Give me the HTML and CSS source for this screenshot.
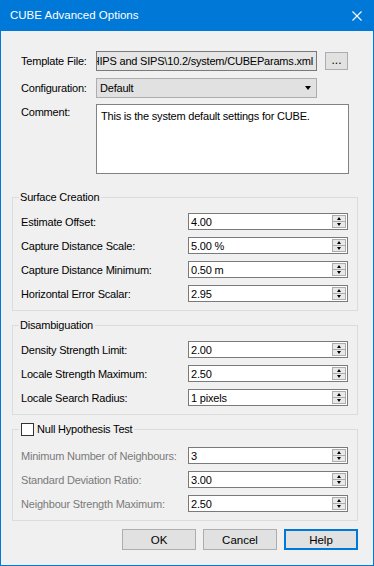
FILE: index.html
```html
<!DOCTYPE html>
<html>
<head>
	<title>CUBE Advanced Options</title>
	<link rel="stylesheet" href="styles.css">
</head>
<body>

	<div class="window">
		<div class="titlebar">
			<span class="title">CUBE Advanced Options</span>
			<svg class="close" width="10" height="10" viewBox="0 0 10 10">
				<path d="M0.5 0.5 L9.5 9.5 M9.5 0.5 L0.5 9.5" stroke="#fff" stroke-width="1.1" fill="none"/>
			</svg>
		</div>

		<div class="content">
			<div class="row">
				<label>Template File:</label>
				<div class="path"><span>HIPS and SIPS\10.2/system/CUBEParams.xml</span></div>
				<button class="browse">...</button>
			</div>
			<div class="row">
				<label>Configuration:</label>
				<div class="combo">Default<span class="arrow"></span></div>
			</div>
			<div class="row comment-row">
				<label>Comment:</label>
				<div class="memo">This is the system default settings for CUBE.</div>
			</div>

			<fieldset class="group">
				<legend>Surface Creation</legend>
				<div class="field"><label>Estimate Offset:</label><div class="spin"><span class="val">4.00</span><span class="spinbtn"><i class="up"></i><i class="down"></i></span></div></div>
				<div class="field"><label>Capture Distance Scale:</label><div class="spin"><span class="val">5.00 %</span><span class="spinbtn"><i class="up"></i><i class="down"></i></span></div></div>
				<div class="field"><label>Capture Distance Minimum:</label><div class="spin"><span class="val">0.50 m</span><span class="spinbtn"><i class="up"></i><i class="down"></i></span></div></div>
				<div class="field"><label>Horizontal Error Scalar:</label><div class="spin"><span class="val">2.95</span><span class="spinbtn"><i class="up"></i><i class="down"></i></span></div></div>
			</fieldset>

			<fieldset class="group">
				<legend>Disambiguation</legend>
				<div class="field"><label>Density Strength Limit:</label><div class="spin"><span class="val">2.00</span><span class="spinbtn"><i class="up"></i><i class="down"></i></span></div></div>
				<div class="field"><label>Locale Strength Maximum:</label><div class="spin"><span class="val">2.50</span><span class="spinbtn"><i class="up"></i><i class="down"></i></span></div></div>
				<div class="field"><label>Locale Search Radius:</label><div class="spin"><span class="val">1 pixels</span><span class="spinbtn"><i class="up"></i><i class="down"></i></span></div></div>
			</fieldset>

			<fieldset class="group null-group">
				<legend><span class="check"></span>Null Hypothesis Test</legend>
				<div class="field disabled"><label>Minimum Number of Neighbours:</label><div class="spin"><span class="val">3</span><span class="spinbtn"><i class="up"></i><i class="down"></i></span></div></div>
				<div class="field disabled"><label>Standard Deviation Ratio:</label><div class="spin"><span class="val">3.00</span><span class="spinbtn"><i class="up"></i><i class="down"></i></span></div></div>
				<div class="field disabled"><label>Neighbour Strength Maximum:</label><div class="spin"><span class="val">2.50</span><span class="spinbtn"><i class="up"></i><i class="down"></i></span></div></div>
			</fieldset>

			<div class="buttons">
				<button class="btn">OK</button>
				<button class="btn">Cancel</button>
				<button class="btn default">Help</button>
			</div>
		</div>
	</div>

</body>
</html>
```

FILE: styles.css
```css
body{
	margin: 0;
	background: #fff;
	font-family: "Liberation Sans", Arial, sans-serif;
	font-size: 11px;
	letter-spacing: -0.2px;
	color: #000;
}

.window{
	width: 374px;
	height: 566px;
	box-sizing: border-box;
	border: 1px solid #0078d7;
	border-top: 0;
	background: #f0f0f0;
}

.titlebar{
	height: 31px;
	background: #0078d7;
	color: #fff;
	display: flex;
	align-items: center;
	justify-content: space-between;
	padding: 0 11px 0 9px;
}

.title{
	font-size: 11.5px;
	letter-spacing: 0;
	padding-bottom: 1px;
}

.content{
	padding: 20px 15px 0 11px;
}

label{
	white-space: nowrap;
}

/* top part */
.row{
	display: flex;
	align-items: center;
	height: 20px;
	margin-bottom: 7px;
	padding-left: 9px;
}

.row label{
	width: 75px;
	flex: none;
}

.path{
	width: 221px;
	height: 20px;
	box-sizing: border-box;
	border: 1px solid #7a7a7a;
	background: #e5e5e5;
	display: flex;
	align-items: center;
	justify-content: flex-end;
	overflow: hidden;
	white-space: nowrap;
	padding-right: 3px;
}

.path span{
	flex: none;
}

.browse{
	margin-left: 8px;
	width: 23px;
	height: 18px;
	padding: 0 0 3px;
	border: 1px solid #adadad;
	background: #e1e1e1;
	font-family: inherit;
	font-size: 12px;
	line-height: 12px;
}

.combo{
	width: 221px;
	height: 20px;
	box-sizing: border-box;
	border: 1px solid #adadad;
	background: #e1e1e1;
	display: flex;
	align-items: center;
	justify-content: space-between;
	padding: 0 5px 0 3px;
}

.arrow{
	border-left: 3.5px solid transparent;
	border-right: 3.5px solid transparent;
	border-top: 4px solid #000;
}

.comment-row{
	height: 70px;
	align-items: flex-start;
	margin-bottom: 0;
	margin-top: -1px;
}

.comment-row label{
	line-height: 14px;
	margin-top: 1px;
}

.memo{
	width: 253px;
	height: 70px;
	box-sizing: border-box;
	border: 1px solid #828282;
	background: #fff;
	padding: 3px 4px;
	line-height: 16px;
}

/* group boxes */
.group{
	margin: 15px 0 0;
	padding: 8px 8px 8px 8px;
	border: 1px solid #dcdcdc;
	min-width: 0;
}

.group + .group{
	margin-top: 6px;
}

.group legend{
	padding: 0 2px 0 1px;
	margin-left: -2px;
	line-height: 16px;
}

.null-group{
	padding-top: 10px;
}

.null-group legend{
	display: flex;
	align-items: center;
}

.check{
	width: 11px;
	height: 11px;
	border: 1px solid #333;
	background: #fff;
	margin-right: 3px;
	margin-left: 1px;
}

.field{
	display: flex;
	align-items: center;
	height: 17px;
	margin-bottom: 7px;
}

.field:last-child{
	margin-bottom: 0;
}

.field label{
	width: 167px;
	flex: none;
}

.disabled label{
	color: #7a7a7a;
}

.spin{
	width: 160px;
	height: 17px;
	box-sizing: border-box;
	border: 1px solid #7a7a7a;
	background: #fff;
	display: flex;
	align-items: center;
	justify-content: space-between;
	padding: 0 1px 0 2px;
}

.spinbtn{
	width: 14px;
	height: 13px;
	box-sizing: border-box;
	border: 1px solid #acacac;
	background: #e9e9e9;
	display: flex;
	flex-direction: column;
}

.spinbtn i{
	flex: 1;
	display: flex;
	align-items: center;
	justify-content: center;
}

.spinbtn .up{
	border-bottom: 1px solid #acacac;
}

.spinbtn .up::after{
	content: "";
	border-left: 2.5px solid transparent;
	border-right: 2.5px solid transparent;
	border-bottom: 3px solid #000;
}

.spinbtn .down::after{
	content: "";
	border-left: 2.5px solid transparent;
	border-right: 2.5px solid transparent;
	border-top: 3px solid #000;
}

/* buttons */
.buttons{
	display: flex;
	justify-content: flex-end;
	gap: 7px;
	margin-top: 8px;
}

.btn{
	width: 74px;
	height: 21px;
	border: 1px solid #adadad;
	background: #e1e1e1;
	font-family: inherit;
	font-size: 11.5px;
	letter-spacing: 0;
	padding: 0;
}

.btn.default{
	border: 2px solid #0078d7;
}
```
